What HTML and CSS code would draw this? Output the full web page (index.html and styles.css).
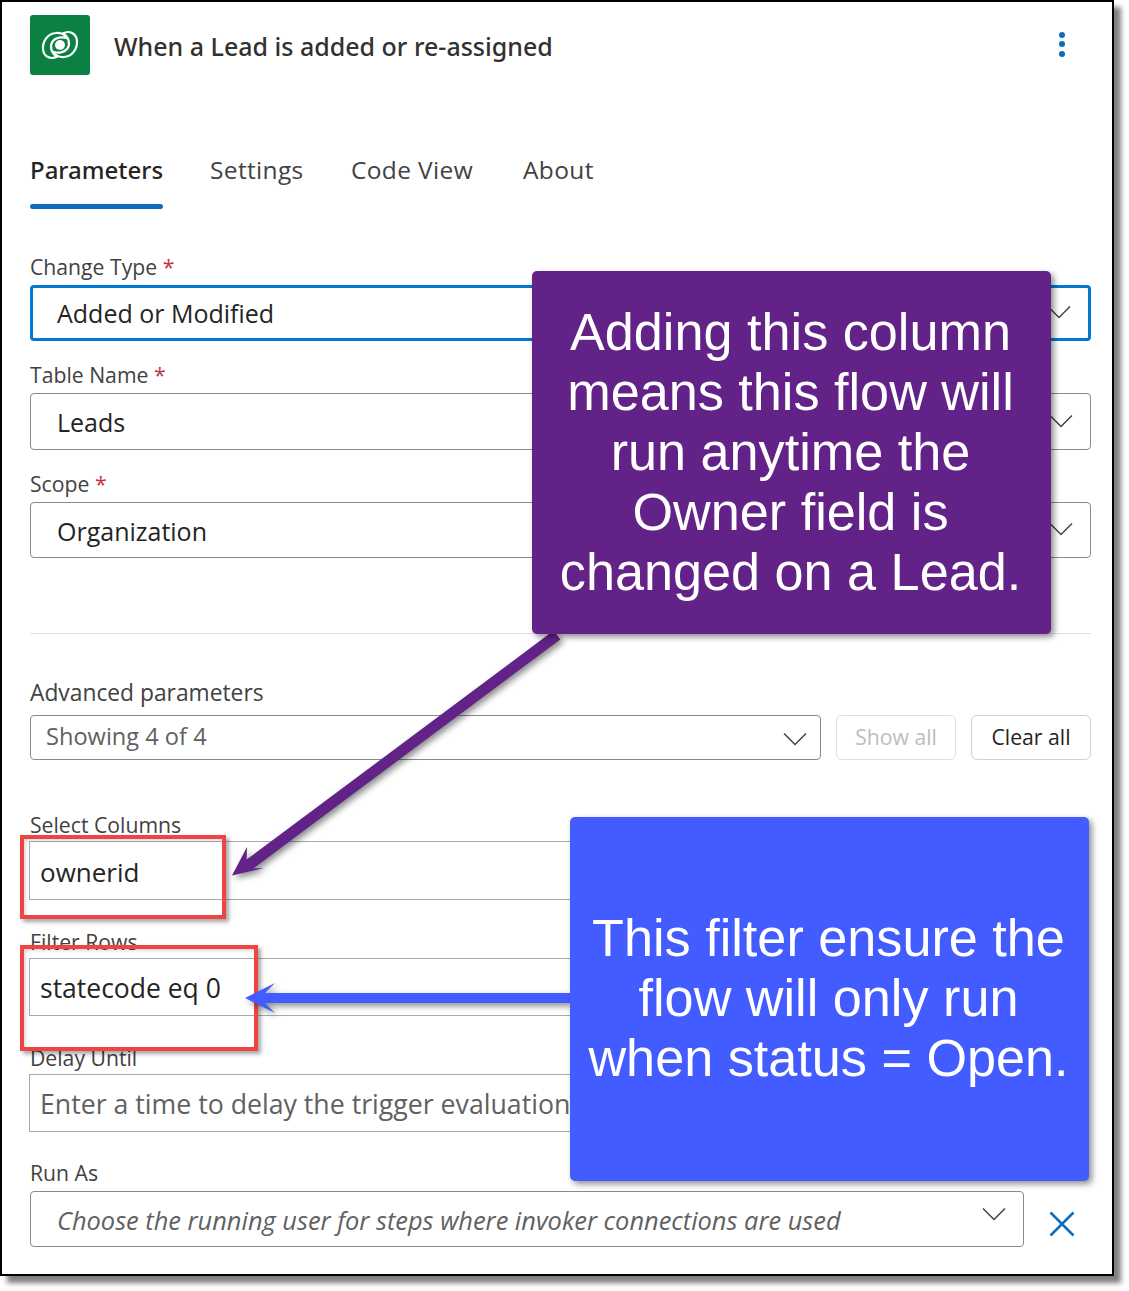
FILE: index.html
```html
<!DOCTYPE html>
<html lang="en">
<head>
<meta charset="utf-8">
<title>When a Lead is added or re-assigned</title>
<link rel="stylesheet" href="styles.css">
</head>
<body>
<main class="frame">
  <header class="head">
    <div class="logo">
      <svg width="60" height="60" viewBox="0 0 60 60" fill="none" stroke="#fff" stroke-width="2.200" stroke-linecap="round">
        <path d="M27 41.500C21 45 13.500 42 13 34C12.500 26 18 18.500 26 18C31 17.500 35 20 36.500 23"/>
        <path d="M33 18.500C39 15 46.500 18 47 26C47.500 34 42 41.500 34 42C29 42.500 25 40 23.500 37"/>
        <path d="M27 41.500C21 38 19.500 31 22.500 26.500C25.500 22.500 32 21.500 36.500 23"/>
        <path d="M33 18.500C39 22 40.500 29 37.500 33.500C34.500 37.500 28 38.500 23.500 37"/>
        <circle cx="30" cy="30" r="5" fill="#fff" stroke="none"/>
      </svg>
    </div>
    <h1 class="title">When a Lead is added or re-assigned</h1>
    <div class="dots"><i></i><i></i><i></i></div>
  </header>

  <nav class="tabs">
    <span class="tab tab-on">Parameters</span>
    <span class="tab tab-b">Settings</span>
    <span class="tab tab-c">Code View</span>
    <span class="tab tab-d">About</span>
  </nav>

  <section class="group-a">
    <label class="lbl">Change Type <em>*</em></label>
    <div class="box box-focus">Added or Modified
      <svg class="chev" width="24" height="14" viewBox="0 0 24 14"><path d="M1 1.500L12 12.500L23 1.500"/></svg>
    </div>
    <label class="lbl lbl-gap">Table Name <em>*</em></label>
    <div class="box box-57">Leads
      <svg class="chev" width="24" height="14" viewBox="0 0 24 14"><path d="M1 1.500L12 12.500L23 1.500"/></svg>
    </div>
    <label class="lbl lbl-gap">Scope <em>*</em></label>
    <div class="box">Organization
      <svg class="chev" width="24" height="14" viewBox="0 0 24 14"><path d="M1 1.500L12 12.500L23 1.500"/></svg>
    </div>
  </section>

  <hr class="rule">

  <section class="adv">
    <label class="lbl lbl-adv">Advanced parameters</label>
    <div class="adv-row">
      <div class="adv-select">Showing 4 of 4
        <svg class="chev" width="24" height="14" viewBox="0 0 24 14"><path d="M1 1.500L12 12.500L23 1.500"/></svg>
      </div>
      <button class="btn btn-off">Show all</button>
      <button class="btn">Clear all</button>
    </div>
  </section>

  <section class="group-b">
    <label class="lbl lbl-in">Select Columns</label>
    <div class="tbox tbox-59">ownerid</div>
    <label class="lbl lbl-in lbl-b">Filter Rows</label>
    <div class="tbox">statecode eq 0</div>
    <label class="lbl lbl-in lbl-b">Delay Until</label>
    <div class="tbox tbox-ph">Enter a time to delay the trigger evaluation</div>
    <label class="lbl lbl-in lbl-run">Run As</label>
    <div class="run-row">
      <div class="box run-select">Choose the running user for steps where invoker connections are used
        <svg class="chev" width="24" height="14" viewBox="0 0 24 14"><path d="M1 1.500L12 12.500L23 1.500"/></svg>
      </div>
      <svg class="close" width="26" height="26" viewBox="0 0 26 26"><path d="M1.500 1.500L24.500 24.500M24.500 1.500L1.500 24.500"/></svg>
    </div>
  </section>

  <div class="redbox redbox-a"></div>
  <div class="redbox redbox-b"></div>

  <svg class="arrows" width="1129" height="1291" viewBox="0 0 1129 1291">
    <path class="ar-purple" d="M553.700 630.600L560.300 639.400L253.300 868.400L264 868L232 875.500L247 847L246.700 859.600Z"/>
    <path class="ar-blue" d="M570 993V1003H265L275 1013L245 998L275 983L265 993Z"/>
  </svg>

  <aside class="note note-purple">Adding this column means this flow will run anytime the Owner field is changed on a Lead.</aside>
  <aside class="note note-blue">This filter ensure the flow will only run when status = Open.</aside>
</main>
</body>
</html>
```
FILE: styles.css
```css
* { box-sizing: border-box; }
html, body { margin: 0; padding: 0; background: #fff; }
body { width: 1129px; height: 1291px; overflow: hidden; font-family: "Open Sans", "Noto Sans", sans-serif; color: #242424; }

.frame {
  width: 1114px;
  height: 1276px;
  border: 2px solid #000;
  background: #fff;
  box-shadow: 7px 7px 5px rgba(0, 0, 0, .5);
  padding: 13px 21px 0 28px;
}

.head { display: flex; align-items: center; height: 60px; }
.logo { width: 60px; height: 60px; flex: none; background: #0a8043; border-radius: 3px; }
.logo svg { display: block; }
.title { margin: 0 0 0 24px; font-family: "Noto Sans", "Open Sans", sans-serif; font-size: 25px; font-weight: 500; line-height: 62px; height: 60px; flex: 1; color: #323130; white-space: nowrap; }
.dots { display: flex; flex-direction: column; gap: 3.500px; width: 6px; margin-right: 26px; margin-top: -2px; }
.dots i { display: block; width: 6px; height: 6px; border-radius: 50%; background: #0f6cbd; }

.tabs { display: flex; height: 135px; padding-top: 79px; font-size: 24.500px; letter-spacing: .35px; color: #424242; line-height: 32px; }
.tab { white-space: nowrap; }
.tab-on { position: relative; font-family: "Noto Sans", "Open Sans", sans-serif; font-weight: 500; font-size: 24px; letter-spacing: 0; width: 133px; color: #242424; }
.tab-on::after { content: ""; position: absolute; left: 0; right: 0; top: 50px; height: 5px; border-radius: 3px; background: #0f6cbd; }
.tab-b { margin-left: 47px; width: 94px; }
.tab-c { margin-left: 47px; width: 125px; }
.tab-d { margin-left: 47px; }

.lbl { display: block; height: 24px; line-height: 24px; font-size: 21.200px; color: #424242; white-space: nowrap; }
.lbl em { font-style: normal; color: #c4314b; }
.lbl-gap { margin-top: 22px; }
.lbl-adv { font-size: 22.800px; line-height: 22px; }
.lbl-in { margin-left: 1px; }

.group-a { margin-top: 45px; }
.box {
  position: relative;
  height: 56px;
  margin-top: 6px;
  padding-left: 26px;
  border: 1px solid #8a8a8a;
  border-radius: 4px;
  line-height: 56px;
  font-size: 25px;
  white-space: nowrap;
}
.box-57 { height: 57px; }
.box-focus { border: 3px solid #0078d4; padding-left: 24px; line-height: 50px; }
.chev { position: absolute; right: 17px; top: 50%; margin-top: -8px; fill: none; stroke: #424242; stroke-width: 1.500; }

.rule { margin: 75px 0 0; height: 1px; border: 0; background: #e0e0e0; }

.adv { margin-top: 48px; }
.adv-row { display: flex; margin-top: 9px; }
.adv-select {
  position: relative;
  width: 791px;
  height: 45px;
  padding-left: 15px;
  border: 1px solid #8a8a8a;
  border-radius: 4px;
  line-height: 40px;
  font-size: 23.600px;
  color: #616161;
  white-space: nowrap;
}
.adv-select .chev { right: 13px; margin-top: -6px; }
.btn {
  width: 120px;
  height: 45px;
  margin-left: 15px;
  padding: 0 0 2px;
  background: #fff;
  border: 1px solid #d1d1d1;
  border-radius: 6px;
  font: 400 21.200px "Open Sans", "Noto Sans", sans-serif;
  color: #242424;
}
.btn-off { border-color: #e0e0e0; color: #bdbdbd; }

.group-b { margin-top: 53px; margin-left: -1px; }
.tbox {
  height: 58px;
  margin-top: 4px;
  margin-right: 20px;
  padding-left: 10px;
  border: 1px solid #aaa;
  line-height: 58px;
  font-size: 26.500px;
  white-space: nowrap;
}
.tbox-59 { height: 59px; line-height: 60px; font-size: 26px; }
.tbox-ph { color: #616161; font-size: 26.700px; }
.lbl-b { margin-top: 30px; }
.lbl-run { margin-top: 29px; }
.run-row { display: flex; align-items: center; margin-left: 1px; margin-top: 6px; }
.run-select { width: 994px; margin-top: 0; color: #616161; font-style: italic; font-size: 25.400px; line-height: 56px; }
.run-select .chev { right: 17px; margin-top: -12px; }
.close { margin: 10px 0 0 25px; fill: none; stroke: #0f6cbd; stroke-width: 2.500; flex: none; }

.redbox { position: absolute; border: 4px solid #f04444; box-shadow: 3px 3px 4px rgba(0, 0, 0, .35), inset 3px 3px 4px -2px rgba(0, 0, 0, .2); }
.redbox-a { left: 20px; top: 835px; width: 206px; height: 84px; }
.redbox-b { left: 20px; top: 945px; width: 238px; height: 106px; }

.arrows { position: absolute; left: 0; top: 0; pointer-events: none; }
.ar-purple { fill: #632287; filter: drop-shadow(3px 3px 3px rgba(0, 0, 0, .45)); }
.ar-blue { fill: #435cff; filter: drop-shadow(3px 3px 3px rgba(0, 0, 0, .45)); }

.note {
  position: absolute;
  display: flex;
  align-items: center;
  text-align: center;
  width: 519px;
  border-radius: 5px;
  color: #fff;
  font-family: "Liberation Sans", Arial, sans-serif;
  font-size: 52.200px;
  line-height: 60px;
  box-shadow: 3px 3px 6px rgba(0, 0, 0, .45);
}
.note-purple { left: 532px; top: 271px; height: 363px; background: #632287; padding: 0 20px 2px 18px; }
.note-blue { left: 570px; top: 817px; height: 364px; background: #435cff; padding: 0 11px 3px 9px; }
```
